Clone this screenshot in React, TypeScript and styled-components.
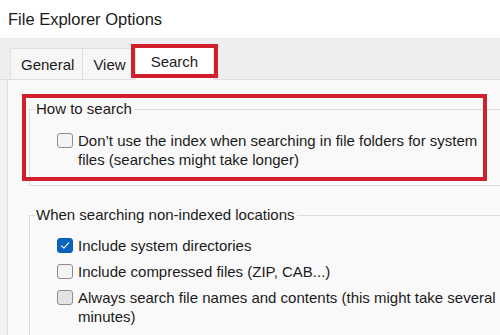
import React from "react";
import styled, { createGlobalStyle } from "styled-components";

const Global = createGlobalStyle`
  html, body { margin: 0; padding: 0; background: #ffffff; overflow: hidden; }
  body { font-family: "Liberation Sans", Arial, sans-serif; color: #1b1b1b; }
  * { box-sizing: border-box; }
`;

const Window = styled.div`
  width: 500px;
  height: 335px;
  display: flex;
  flex-direction: column;
  overflow: hidden;
  background: #ffffff;
`;

const TitleBar = styled.div`
  flex: none;
  height: 39px;
  display: flex;
  align-items: center;
  padding: 0 0 0 8px;
  font-size: 16.5px;
  background: #ffffff;
  border-bottom: 1px solid #e8e8e8;
`;

const TabStrip = styled.div`
  flex: none;
  height: 41px;
  display: flex;
  align-items: flex-end;
  padding-left: 10px;
  background: #eeeeee;
  border-bottom: 1px solid #dedede;
`;

const Tab = styled.div<{ $active?: boolean }>`
  position: relative;
  height: ${(p) => (p.$active ? 35 : 32)}px;
  display: flex;
  align-items: center;
  padding: ${(p) => (p.$active ? "0 15px 2px 15px" : "0 8px 0 10px")};
  margin-bottom: -1px;
  font-size: 15px;
  background: ${(p) => (p.$active ? "#ffffff" : "#f6f6f6")};
  border: 1px solid #e0e0e0;
  border-bottom: ${(p) => (p.$active ? "1px solid #ffffff" : "1px solid #dedede")};
  margin-left: ${(p) => (p.$active ? "0" : "-1px")};
  &:first-child { margin-left: 0; }
`;

const Highlight = styled.div<{ $top: number; $left: number; $width: number; $height: number }>`
  position: absolute;
  top: ${(p) => p.$top}px;
  left: ${(p) => p.$left}px;
  width: ${(p) => p.$width}px;
  height: ${(p) => p.$height}px;
  border: 4px solid #d21f2d;
  pointer-events: none;
`;

const Body = styled.div`
  flex: 1;
  display: flex;
  background: #f2f2f2;
  padding-left: 7px;
`;

const Panel = styled.div`
  flex: 1;
  margin-right: -40px;
  display: flex;
  flex-direction: column;
  gap: 19px;
  padding: 19px 0 0 21px;
  background: #f9f9f9;
  border-left: 1px solid #dedede;
`;

const Group = styled.fieldset<{ $bottom: number }>`
  position: relative;
  margin: 0;
  padding: 0 0 ${(p) => p.$bottom}px 5px;
  border: 1px solid #dcdcdc;
  min-width: 0;
`;

const Legend = styled.legend`
  padding: 0 2px 0 1px;
  font-size: 15px;
  line-height: 20px;
`;

const Options = styled.div<{ $top: number }>`
  display: flex;
  flex-direction: column;
  gap: 7px;
  padding: ${(p) => p.$top}px 0 0 22px;
`;

const Option = styled.label`
  display: flex;
  align-items: flex-start;
  gap: 5px;
  font-size: 15px;
  line-height: 19px;
  width: 446px;
`;

const Box = styled.span<{ $checked?: boolean; $shaded?: boolean }>`
  flex: none;
  width: 16px;
  height: 15px;
  margin-top: 2px;
  border-radius: 3px;
  display: flex;
  align-items: center;
  justify-content: center;
  border: 1px solid ${(p) => (p.$checked ? "#005fb8" : "#8d8d8d")};
  background: ${(p) => (p.$checked ? "#0a63bd" : p.$shaded ? "#e3e3e3" : "#f4f4f4")};
`;

const Check = () => (
  <svg width="10" height="9" viewBox="0 0 10 9" fill="none">
    <path d="M1.5 4.8 L3.9 7.2 L8.6 1.8" stroke="#ffffff" strokeWidth="1.1" strokeLinecap="round" strokeLinejoin="round" />
  </svg>
);

export default function App() {
  return (
    <Window>
      <Global />
      <TitleBar>File Explorer Options</TitleBar>
      <TabStrip>
        <Tab>General</Tab>
        <Tab>View</Tab>
        <Tab $active>
          Search
          <Highlight $top={-2} $left={-5} $width={87} $height={34} />
        </Tab>
      </TabStrip>
      <Body>
        <Panel>
          <Group $bottom={16}>
            <Legend>How to search</Legend>
            <Options $top={12}>
              <Option>
                <Box />
                <span>Don’t use the index when searching in file folders for system files (searches might take longer)</span>
              </Option>
            </Options>
            <Highlight $top={-25} $left={-8} $width={465} $height={87} />
          </Group>
          <Group $bottom={20}>
            <Legend>When searching non-indexed locations</Legend>
            <Options $top={11}>
              <Option>
                <Box $checked>
                  <Check />
                </Box>
                <span>Include system directories</span>
              </Option>
              <Option>
                <Box />
                <span>Include compressed files (ZIP, CAB...)</span>
              </Option>
              <Option>
                <Box $shaded />
                <span>Always search file names and contents (this might take several minutes)</span>
              </Option>
            </Options>
          </Group>
        </Panel>
      </Body>
    </Window>
  );
}
